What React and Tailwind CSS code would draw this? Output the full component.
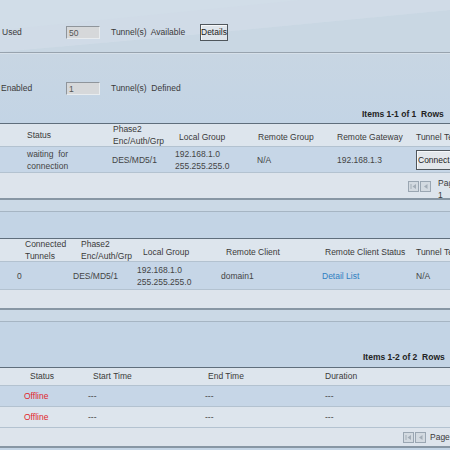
import React from 'react';

// Small pager buttons (first / previous), greyed out
const PagerButtons = () => (
  <div className="flex gap-[1px]">
    <div className="w-[11px] h-[11px] border border-[#9aa6b2] bg-[#d3dae1] flex items-center justify-center">
      <svg width="7" height="7" viewBox="0 0 7 7">
        <rect x="0.5" y="1" width="1" height="5" fill="#a3adb7" />
        <path d="M6 1 L2.5 3.5 L6 6 Z" fill="#a3adb7" />
      </svg>
    </div>
    <div className="w-[11px] h-[11px] border border-[#9aa6b2] bg-[#d3dae1] flex items-center justify-center">
      <svg width="7" height="7" viewBox="0 0 7 7">
        <path d="M5.5 1 L2 3.5 L5.5 6 Z" fill="#a3adb7" />
      </svg>
    </div>
  </div>
);

const Input = ({ value }) => (
  <div className="w-[34px] h-[13px] bg-[#d6d8da] border-t border-l border-[#8f959b] border-b border-r border-b-[#e8ecef] border-r-[#e8ecef] pl-[2px] leading-[12px] text-[#555]">
    {value}
  </div>
);

const Band = () => (
  <>
    <div className="h-[11px] bg-[#cbd9e6]" />
    <div className="h-[1px] bg-[#a6b5c3]" />
  </>
);

export default function App() {
  return (
    <div className="w-[450px] h-[450px] overflow-hidden bg-[#c3d4e5] font-['Liberation_Sans',Arial,sans-serif] text-[8.5px] text-[#3a3a3a] whitespace-nowrap">
      {/* top: tunnels available */}
      <div className="relative h-[52px] bg-[#c9d7e3]">
        <svg className="absolute inset-0" width="450" height="52" viewBox="0 0 450 52">
          <polygon points="0,0 450,0 450,10 180,36 0,52" fill="#d1dde8" />
          <polygon points="450,10 450,0 300,0 0,30 0,52 180,36" fill="#cfdbe6" opacity="0.6" />
        </svg>
        <div className="relative flex items-center pt-[24px] h-[41px]">
          <div className="w-[66px] pl-[2px]">Used</div>
          <Input value="50" />
          <div className="w-[100px] pl-[11px]">Tunnel(s)&nbsp; Available</div>
          <button className="h-[17px] w-[28px] border border-[#4f565c] bg-[#dfe5eb] shadow-[inset_1px_1px_0_#f6f8fa] text-[8.5px] text-[#222] leading-[15px] px-0">
            Details
          </button>
        </div>
      </div>
      <div className="h-[1px] bg-[#98a3ae]" />
      <div className="h-[1px] bg-[#d6e0e9]" />

      {/* tunnels defined */}
      <div className="bg-gradient-to-b from-[#c8d6e3] to-[#c3d4e5]">
        <div className="flex items-center pt-[28px] h-[41px]">
          <div className="w-[66px] pl-[1px]">Enabled</div>
          <Input value="1" />
          <div className="pl-[11px]">Tunnel(s)&nbsp; Defined</div>
        </div>
        <div className="h-[24px] pl-[362px] pt-[14px] leading-[10px] font-bold text-[#222]">Items 1-1 of 1&nbsp; Rows</div>
        <div className="h-[4px]" />
      </div>

      {/* table 1: site to site */}
      <div className="h-[1px] bg-[#5f6e7c]" />
      <div className="flex h-[22px] items-center bg-[#dde5ed] leading-[12px]">
        <div className="w-[110px] pl-[27px]">Status</div>
        <div className="w-[62px] pl-[3px]">Phase2<br />Enc/Auth/Grp</div>
        <div className="w-[82px] pl-[7px] pt-[4px]">Local Group</div>
        <div className="w-[80px] pl-[4px] pt-[4px]">Remote Group</div>
        <div className="w-[79px] pl-[3px] pt-[4px]">Remote Gateway</div>
        <div className="flex-1 pl-[3px] pt-[4px] overflow-hidden">Tunnel Test</div>
      </div>
      <div className="h-[1px] bg-[#b3c2d0]" />
      <div className="flex h-[25px] items-center bg-[#c6d6e7] leading-[12px] text-[#444]">
        <div className="w-[110px] pl-[27px]">waiting&nbsp; for<br />connection</div>
        <div className="w-[62px] pl-[2px]">DES/MD5/1</div>
        <div className="w-[82px] pl-[3px]">192.168.1.0<br />255.255.255.0</div>
        <div className="w-[80px] pl-[3px]">N/A</div>
        <div className="w-[79px] pl-[3px]">192.168.1.3</div>
        <div className="flex-1 pl-[3px] overflow-hidden">
          <button className="h-[20px] w-[40px] border border-[#4f565c] bg-[#e3e7eb] shadow-[inset_1px_1px_0_#f6f8fa] text-[8.5px] text-[#222] text-left pl-[1px]">Connect</button>
        </div>
      </div>
      <div className="h-[1px] bg-[#b3c2d0]" />
      <div className="flex h-[25px] bg-[#dde4ec] pl-[408px] pt-[7px] gap-[7px] leading-[12px]">
        <div className="pt-[1px]"><PagerButtons /></div>
        <div className="-mt-[3px] overflow-hidden">Page<br />1</div>
      </div>
      <div className="h-[2px] bg-[#8796a4]" />

      <Band />
      <div className="h-[26px]" />

      {/* table 2: remote clients */}
      <div className="h-[1px] bg-[#5f6e7c]" />
      <div className="flex h-[22px] items-center bg-[#dde5ed] leading-[12px]">
        <div className="w-[70px] pl-[25px]">Connected<br />Tunnels</div>
        <div className="w-[62px] pl-[11px]">Phase2<br />Enc/Auth/Grp</div>
        <div className="w-[84px] pl-[11px] pt-[4px]">Local Group</div>
        <div className="w-[106px] pl-[10px] pt-[4px]">Remote Client</div>
        <div className="w-[91px] pl-[3px] pt-[4px]">Remote Client Status</div>
        <div className="flex-1 pl-[3px] pt-[4px] overflow-hidden">Tunnel Test</div>
      </div>
      <div className="h-[1px] bg-[#b3c2d0]" />
      <div className="flex h-[27px] items-center bg-[#c6d6e7] leading-[12px] text-[#444]">
        <div className="w-[70px] pl-[17px]">0</div>
        <div className="w-[62px] pl-[3px]">DES/MD5/1</div>
        <div className="w-[84px] pl-[5px]">192.168.1.0<br />255.255.255.0</div>
        <div className="w-[106px] pl-[5px]">domain1</div>
        <div className="w-[91px] text-[#2f7fc1]">Detail List</div>
        <div className="flex-1 pl-[3px]">N/A</div>
      </div>
      <div className="h-[1px] bg-[#b3c2d0]" />
      <div className="h-[18px] bg-[#dde4ec]" />
      <div className="h-[2px] bg-[#8796a4]" />

      <Band />
      <div className="h-[30px]" />
      <div className="h-[15px] pl-[363px] leading-[10px] font-bold text-[#222]">Items 1-2 of 2&nbsp; Rows</div>

      {/* table 3: connection log */}
      <div className="h-[1px] bg-[#5f6e7c]" />
      <div className="flex h-[17px] items-center bg-[#dde5ed]">
        <div className="w-[88px] pl-[30px]">Status</div>
        <div className="w-[117px] pl-[5px]">Start Time</div>
        <div className="w-[120px] pl-[3px]">End Time</div>
        <div className="flex-1">Duration</div>
      </div>
      <div className="h-[1px] bg-[#b3c2d0]" />
      <div className="flex h-[20px] items-center bg-[#c6d6e7] text-[#444]">
        <div className="w-[88px] pl-[24px] text-[#e0252b]">Offline</div>
        <div className="w-[117px]">---</div>
        <div className="w-[120px]">---</div>
        <div className="flex-1">---</div>
      </div>
      <div className="h-[1px] bg-[#b3c2d0]" />
      <div className="flex h-[20px] items-center bg-[#dde5ed] text-[#444]">
        <div className="w-[88px] pl-[24px] text-[#e0252b]">Offline</div>
        <div className="w-[117px]">---</div>
        <div className="w-[120px]">---</div>
        <div className="flex-1">---</div>
      </div>
      <div className="h-[1px] bg-[#b3c2d0]" />
      <div className="flex h-[18px] items-center bg-[#dde4ec] pl-[403px] gap-[4px]">
        <PagerButtons />
        <div className="overflow-hidden">Page</div>
      </div>
      <div className="h-[2px] bg-[#8796a4]" />
    </div>
  );
}
